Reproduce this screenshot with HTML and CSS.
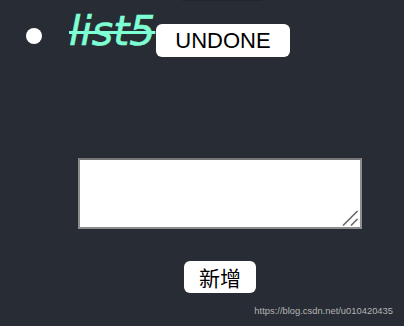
FILE: index.html
```html
<!DOCTYPE html>
<html>
<head>
<meta charset="utf-8">
<link rel="stylesheet" href="styles.css">
</head>
<body>
<div class="app">
  <div class="edge-shadow"></div>
  <ul class="todo-list">
    <li class="todo-item">
      <span class="bullet"></span>
      <span class="todo-text done">list5</span>
      <button class="btn btn-undone">UNDONE</button>
    </li>
  </ul>
  <div class="add-form">
    <div class="input-wrap">
      <textarea class="add-input"></textarea>
      <svg class="grip" width="18" height="18" viewBox="0 0 18 18">
        <line x1="2" y1="16.5" x2="16.5" y2="2" stroke="#666" stroke-width="1.6"/>
        <line x1="10" y1="16.5" x2="16.5" y2="10" stroke="#666" stroke-width="1.6"/>
      </svg>
    </div>
    <button class="btn btn-add">新增</button>
  </div>
  <div class="watermark">https://blog.csdn.net/u010420435</div>
</div>
</body>
</html>
```
FILE: styles.css
```css
html, body {
  margin: 0;
  padding: 0;
  background: #282c34;
}
.app {
  position: relative;
  width: 404px;
  height: 326px;
  overflow: hidden;
  background: #282c34;
}
.edge-shadow {
  position: absolute;
  left: 182px;
  top: 0;
  width: 80px;
  height: 1px;
  background: #22262c;
}
.todo-list {
  list-style: none;
  margin: 0;
  padding: 6px 0 0 0;
}
.todo-item {
  display: flex;
  align-items: flex-start;
}
.bullet {
  width: 16px;
  height: 16px;
  border-radius: 50%;
  background: #ffffff;
  margin: 22px 0 0 26px;
  flex: none;
}
.todo-text {
  font-family: "DejaVu Sans", sans-serif;
  font-style: italic;
  font-size: 41px;
  line-height: 46px;
  color: #7fffd4;
  margin: 2px 0 0 27px;
  -webkit-text-stroke: 0.6px #7fffd4;
}
.todo-text.done {
  text-decoration: line-through;
  text-decoration-thickness: 3px;
}
.btn {
  border: none;
  background: #ffffff;
  color: #000000;
  border-radius: 6px;
  cursor: pointer;
}
.btn-undone {
  font-family: "Liberation Sans", Arial, sans-serif;
  font-size: 22px;
  line-height: 25px;
  padding: 4px 19px;
  margin: 18px 0 0 1px;
  height: 33px;
}
.add-form {
  display: flex;
  flex-direction: column;
  align-items: center;
  width: 284px;
  margin: 101px 0 0 78px;
}
.input-wrap {
  position: relative;
  width: 284px;
  height: 71px;
}
.add-input {
  display: block;
  box-sizing: border-box;
  width: 284px;
  height: 71px;
  margin: 0;
  padding: 2px;
  border: 2px solid #8c8c8c;
  border-top-color: #767676;
  background: #ffffff;
  resize: none;
}
.grip {
  position: absolute;
  right: 3px;
  bottom: 2px;
}
.btn-add {
  font-family: "Noto Sans CJK SC", sans-serif;
  font-size: 21px;
  line-height: 24px;
  height: 32px;
  padding: 4px 15px;
  margin-top: 32px;
}
.watermark {
  position: absolute;
  right: 11px;
  top: 305px;
  font-family: "Liberation Sans", Arial, sans-serif;
  font-size: 9.4px;
  color: #b4b4b4;
  white-space: nowrap;
}
```
